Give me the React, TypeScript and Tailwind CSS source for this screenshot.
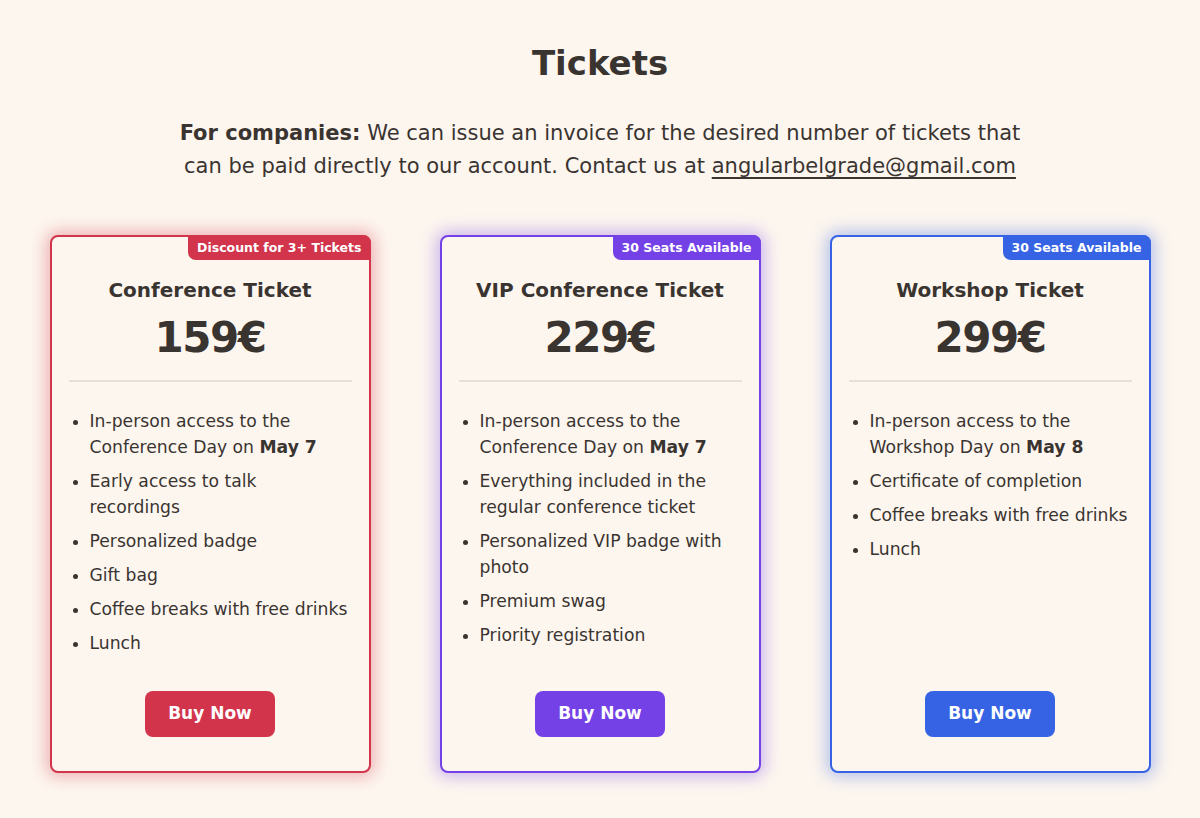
import React from 'react';

interface Ticket {
  name: string;
  price: string;
  badge: string;
  border: string;
  glow: string;
  bg: string;
  items: React.ReactNode[];
}

const tickets: Ticket[] = [
  {
    name: 'Conference Ticket',
    price: '159€',
    badge: 'Discount for 3+ Tickets',
    border: 'border-[#d1344b]',
    glow: 'shadow-[0_0_16px_4px_rgba(209,52,75,0.35)]',
    bg: 'bg-[#d1344b]',
    items: [
      <>In-person access to the Conference Day on <b className="font-bold">May 7</b></>,
      'Early access to talk recordings',
      'Personalized badge',
      'Gift bag',
      'Coffee breaks with free drinks',
      'Lunch',
    ],
  },
  {
    name: 'VIP Conference Ticket',
    price: '229€',
    badge: '30 Seats Available',
    border: 'border-[#7441e6]',
    glow: 'shadow-[0_0_16px_4px_rgba(116,65,230,0.35)]',
    bg: 'bg-[#7441e6]',
    items: [
      <>In-person access to the Conference Day on <b className="font-bold">May 7</b></>,
      'Everything included in the regular conference ticket',
      'Personalized VIP badge with photo',
      'Premium swag',
      'Priority registration',
    ],
  },
  {
    name: 'Workshop Ticket',
    price: '299€',
    badge: '30 Seats Available',
    border: 'border-[#3563e3]',
    glow: 'shadow-[0_0_16px_4px_rgba(53,99,227,0.35)]',
    bg: 'bg-[#3563e3]',
    items: [
      <>In-person access to the Workshop Day on <b className="font-bold">May 8</b></>,
      'Certificate of completion',
      'Coffee breaks with free drinks',
      'Lunch',
    ],
  },
];

const TicketCard: React.FC<{ ticket: Ticket }> = ({ ticket }) => (
  <div
    className={`relative flex h-[538px] w-[321px] flex-col rounded-lg border-2 bg-[#fdf6ef] px-[17px] ${ticket.border} ${ticket.glow}`}
  >
    <div
      className={`absolute -right-[2px] -top-[2px] rounded-bl-lg rounded-tr-lg px-[9px] py-[4px] text-[12.5px] font-bold leading-[17px] text-white ${ticket.bg}`}
    >
      {ticket.badge}
    </div>
    <h3 className="mt-[39px] text-center text-[20px] font-semibold leading-[28px]">{ticket.name}</h3>
    <div className="mt-[6px] text-center text-[42px] font-bold leading-[56px] tracking-[-1.5px]">{ticket.price}</div>
    <hr className="mt-[14px] border-t-2 border-[#e6e0da]" />
    <ul className="mt-[26px] flex flex-1 list-disc flex-col gap-[8px] pl-[21px] text-[17.2px] leading-[26px]">
      {ticket.items.map((item, i) => (
        <li key={i}>{item}</li>
      ))}
    </ul>
    <div className="mb-[34px] flex justify-center">
      <button
        className={`h-[46px] w-[130px] rounded-lg text-[17px] font-semibold text-white ${ticket.bg}`}
      >
        Buy Now
      </button>
    </div>
  </div>
);

export default function App() {
  return (
    <div className="min-h-screen bg-[#fdf6ef] pt-[43px] text-[#3a3431] [font-family:'DejaVu_Sans',sans-serif]">
      <h1 className="text-center text-[34px] font-bold leading-[40px]">Tickets</h1>
      <p className="mx-auto mt-[34px] max-w-[870px] text-center text-[21px] leading-[33px]">
        <b className="font-bold">For companies:</b> We can issue an invoice for the desired number of tickets that
        can be paid directly to our account. Contact us at{' '}
        <a className="underline underline-offset-4" href="#">
          angularbelgrade@gmail.com
        </a>
      </p>
      <div className="mt-[52px] flex justify-center gap-[69px]">
        {tickets.map((t) => (
          <TicketCard key={t.name} ticket={t} />
        ))}
      </div>
    </div>
  );
}
